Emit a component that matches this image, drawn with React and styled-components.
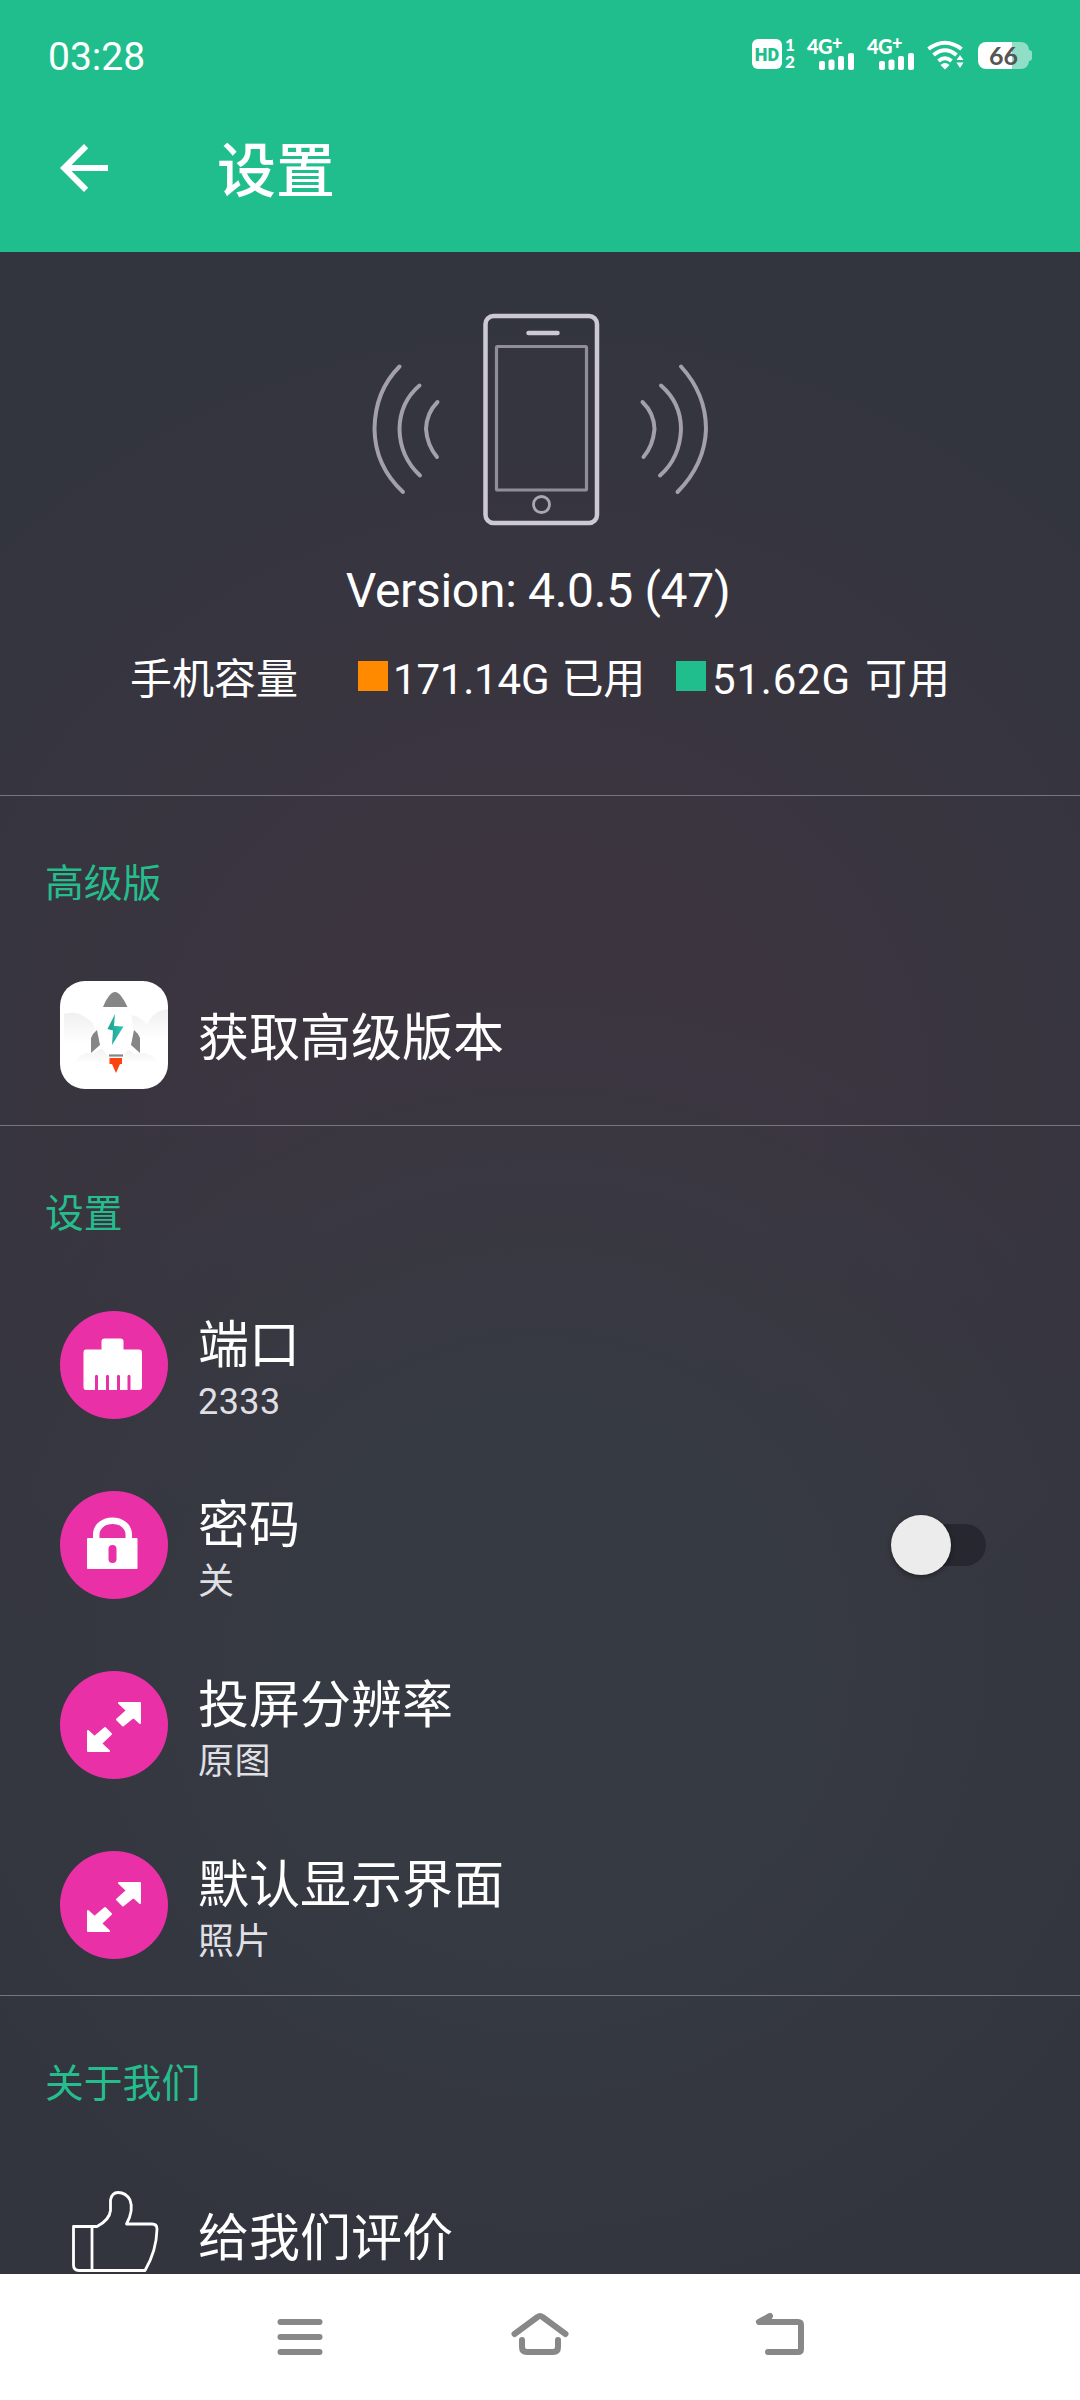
import styled, { createGlobalStyle } from 'styled-components';

const sections = [
  {
    title: '高级版',
    items: [{ id: 'premium', icon: 'rocket', name: '获取高级版本' }],
  },
  {
    title: '设置',
    items: [
      { id: 'port', icon: 'port', name: '端口', value: '2333' },
      { id: 'password', icon: 'lock', name: '密码', value: '关', toggle: true },
      { id: 'resolution', icon: 'expand', name: '投屏分辨率', value: '原图' },
      { id: 'screen', icon: 'expand', name: '默认显示界面', value: '照片' },
    ],
  },
  {
    title: '关于我们',
    items: [{ id: 'rate', icon: 'thumb', name: '给我们评价' }],
  },
];

const RocketIcon = () => (
  <svg width="108" height="108" viewBox="0 0 108 108">
    <defs>
      <linearGradient id="cloud" x1="0" y1="0" x2="0" y2="1">
        <stop offset="0" stopColor="#f0f0f0" />
        <stop offset="0.8" stopColor="#fff" />
      </linearGradient>
      <linearGradient id="bolt" x1="0" y1="0" x2="1" y2="0">
        <stop offset="0" stopColor="#1f9e8f" />
        <stop offset="1" stopColor="#2fc6b4" />
      </linearGradient>
    </defs>
    <rect width="108" height="108" rx="25" fill="#fff" />
    <path d="M4 33Q17 29 26 37Q35 41 37 54V70H4Z" fill="url(#cloud)" />
    <path d="M72 34Q82 36 87 44Q92 30 108 28V66H72Z" fill="url(#cloud)" />
    <path d="M15 80Q22 70 34 72Q45 63 55 70Q66 66 75 73Q88 69 98 80V86H15Z" fill="url(#cloud)" />
    <path d="M55 12C34 26 32 58 47 74H64C78 58 76 26 55 12Z" fill="#fff" />
    <path d="M55 11Q52 11 49 15Q45 20 43 26H67.500Q65 20 61 15Q58 11 55 11Z" fill="#868686" />
    <path d="M37 49L40 64L31 72V57Q33 52 37 49Z" fill="#868686" />
    <path d="M74 49L71 64L80 72V57Q78 52 74 49Z" fill="#868686" />
    <path d="M55 33L47.500 48L53 49.500L52 64L63.500 45.500L54 45Z" fill="url(#bolt)" />
    <path d="M49 74.500H63" stroke="#868686" strokeWidth="2.200" />
    <path d="M49.500 77H62V83H60L56 92L52 83H49.500Z" fill="#fb4310" />
  </svg>
);

const PortIcon = () => (
  <svg width="108" height="108" viewBox="0 0 108 108">
    <circle cx="54" cy="54" r="54" fill="#ea30a7" />
    <path
      d="M26 38.500H41.500V30.500Q41.500 27.500 44.500 27.500H60.500Q63.500 27.500 63.500 30.500V38.500H79Q82 38.500 82 41.500V76Q82 79 79 79H70.500V65Q69 62.500 67.500 65V79H60V65Q58.500 62.500 57 65V79H49V65Q47.500 62.500 46 65V79H38V65Q36.500 62.500 35 65V79H26Q23.500 79 23.500 76V41.500Q23.500 38.500 26 38.500Z"
      fill="#fff"
    />
  </svg>
);

const LockIcon = () => (
  <svg width="108" height="108" viewBox="0 0 108 108">
    <circle cx="54" cy="54" r="54" fill="#ea30a7" />
    <path d="M36.200 50V44C36.200 25 68.800 25 68.800 44V50" fill="none" stroke="#fff" strokeWidth="6.500" />
    <rect x="27" y="47" width="50.500" height="31" rx="1" fill="#fff" />
    <rect x="48.500" y="54" width="8" height="18" rx="4" fill="#ea30a7" />
  </svg>
);

const ExpandIcon = () => (
  <svg width="108" height="108" viewBox="0 0 108 108">
    <circle cx="54" cy="54" r="54" fill="#ea30a7" />
    <g fill="#fff" stroke="#fff" strokeWidth="2" strokeLinejoin="round">
      <path d="M59 32H80V52L73.500 46L63 54.500L57 48.500L67 39.500Z" />
      <path d="M49 80H28V60L34.500 66L45 57L51 63L41 72.500Z" />
    </g>
  </svg>
);

const ThumbIcon = () => (
  <svg width="108" height="108" viewBox="0 0 108 108" fill="none" stroke="#fff" strokeWidth="2.800" strokeLinejoin="round">
    <path d="M13.500 45.500H37Q49.500 39 50.500 29.500V19Q52 11.500 58 11.500Q66 11.500 70 19Q74 29 66.500 43H92Q97 43 97 48Q96.500 70 85 89.500H19Q13.500 89.500 13.500 84Z" />
    <path d="M32 45.500V89.500" />
  </svg>
);

const icons = {
  rocket: RocketIcon,
  port: PortIcon,
  lock: LockIcon,
  expand: ExpandIcon,
  thumb: ThumbIcon,
};

const Signal = () => (
  <SignalBox>
    <SignalLabel>4G<sup>+</sup></SignalLabel>
    <svg width="36" height="17" viewBox="0 0 36 17" fill="#fff">
      <rect x="0" y="8" width="6" height="9" rx="2" />
      <rect x="9.500" y="6.500" width="6" height="10.500" rx="2" />
      <rect x="19" y="3" width="6" height="14" rx="2" />
      <rect x="29" y="0" width="6" height="17" rx="2" />
    </svg>
  </SignalBox>
);

const StatusBar = () => (
  <Status>
    <Clock>03:28</Clock>
    <StatusIcons>
      <HdBadge>HD</HdBadge>
      <SimNumbers>
        <span>1</span>
        <span>2</span>
      </SimNumbers>
      <Signal />
      <Signal />
      <WifiIcon width="38" height="30" viewBox="0 0 38 30">
        <g fill="none" stroke="#fff" strokeWidth="4">
          <path d="M1.500 9Q18 -3.500 34.500 9" />
          <path d="M6.500 15Q18 5.500 29.500 15" />
          <path d="M11.500 21Q18 15.500 24.500 21" />
        </g>
        <path d="M13.500 25Q18 21 22.500 25L18 29.500Z" fill="#fff" />
        <path d="M29.500 20L33 15L36.500 20ZM29.500 22.500L33 28L36.500 22.500Z" fill="#fff" />
      </WifiIcon>
      <Battery>66</Battery>
    </StatusIcons>
  </Status>
);

const PhoneArt = () => (
  <svg width="400" height="220" viewBox="340 310 400 220" fill="none" strokeLinecap="round">
    <rect x="485.500" y="316" width="111.500" height="207" rx="8" stroke="#cdc9d4" strokeWidth="4.500" />
    <path d="M528.500 333H557.500" stroke="#cdc9d4" strokeWidth="4.500" />
    <rect x="496.500" y="346.500" width="90" height="143.500" rx="1" stroke="#918d99" strokeWidth="3.200" />
    <circle cx="541.500" cy="504.500" r="8" stroke="#aba7b2" strokeWidth="2.800" />
    <g stroke="#a4a0ab" strokeWidth="4">
      <path d="M399.500 366.500Q375 391 374.500 429Q375 466 403 492" />
      <path d="M419.500 385.500Q400 402 399.500 429Q400 457 420 475.500" />
      <path d="M437.500 402Q426.500 413 426 429Q427 445 437 457" />
      <path d="M681 366.500Q706 394 706 429Q705 464 677.500 492" />
      <path d="M661 385.500Q681 403 681 429Q680 458 660 475.500" />
      <path d="M642.500 402Q654 413 654.500 429Q653 446 643.500 457" />
    </g>
  </svg>
);

const App = () => {
  return (
    <Page>
      <GlobalStyle />
      <Header>
        <StatusBar />
        <TitleBar>
          <svg width="72" height="72" viewBox="0 0 24 24" fill="#fff">
            <path d="M20 11H7.830l5.590-5.590L12 4l-8 8 8 8 1.410-1.410L7.830 13H20v-2z" />
          </svg>
          <h1>设置</h1>
        </TitleBar>
      </Header>
      <Content>
        <Device>
          <PhoneArt />
          <Version>Version: 4.0.5 (47)</Version>
          <Storage>
            <StorageLabel>手机容量</StorageLabel>
            <Swatch $color="#ff8a00" />
            <Used>171.14G 已用</Used>
            <Swatch $color="#20be8c" />
            <Free>51.62G 可用</Free>
          </Storage>
        </Device>
        {
          sections.map((section) => (
            <Section key={section.title}>
              <SectionTitle>{section.title}</SectionTitle>
              {
                section.items.map((item) => {
                  const Icon = icons[item.icon];
                  return (
                    <Row key={item.id}>
                      <Icon />
                      <RowText>
                        <RowName>{item.name}</RowName>
                        {item.value && <RowValue>{item.value}</RowValue>}
                      </RowText>
                      {item.toggle && <Toggle><Knob /></Toggle>}
                    </Row>
                  );
                })
              }
            </Section>
          ))
        }
      </Content>
      <NavBar>
        <svg width="60" height="60" viewBox="0 0 60 60">
          <path d="M10.500 15H49.500M10.500 30H49.500M10.500 45H49.500" />
        </svg>
        <svg width="60" height="60" viewBox="0 0 60 60">
          <path d="M4.500 27L27.500 10Q30 8 32.500 10L55.500 27M12 33V40Q12 45 17 45H43Q48 45 48 40V33" />
        </svg>
        <svg width="60" height="60" viewBox="0 0 60 60">
          <path d="M20 9L9 15H48Q51 15 51 18V42Q51 45 48 45H18" />
          <path d="M20 9L9 15H20Z" fill="#888" strokeWidth="4" />
        </svg>
      </NavBar>
    </Page>
  );
}

const GlobalStyle = createGlobalStyle`
  * {
    box-sizing: border-box;
  }
  body {
    margin: 0;
  }
  svg {
    display: block;
    flex-shrink: 0;
  }
`

const Page = styled.div`
  display: flex;
  flex-direction: column;
  width: 1080px;
  height: 2400px;
  overflow: hidden;
  color: #fff;
  font-family: Roboto, 'Noto Sans CJK SC', sans-serif;
`

const Header = styled.header`
  height: 252px;
  flex-shrink: 0;
  background: #20be8c;
`

const Status = styled.div`
  display: flex;
  justify-content: space-between;
  height: 84px;
  padding: 0 48px;
`

const Clock = styled.span`
  margin-top: 29px;
  line-height: 56px;
  font-size: 39px;
`

const StatusIcons = styled.div`
  display: flex;
  align-items: flex-start;
  padding-top: 39px;
  font-family: Lato, sans-serif;
`

const HdBadge = styled.span`
  width: 30px;
  height: 30px;
  border-radius: 6px;
  background: #fff;
  color: #20be8c;
  font: 900 18px/31px Roboto, sans-serif;
  text-align: center;
`

const SimNumbers = styled.span`
  display: flex;
  flex-direction: column;
  align-items: center;
  gap: 1px;
  width: 12px;
  margin: -2px 11px 0 2px;
  font-size: 17px;
  font-weight: 900;
  line-height: 16px;
`

const SignalBox = styled.span`
  display: flex;
  flex-direction: column;
  align-items: flex-end;
  width: 48px;
  margin-right: 12px;
  height: 30px;
`

const SignalLabel = styled.span`
  align-self: flex-start;
  height: 14px;
  line-height: 15px;
  font-size: 20px;
  font-weight: 900;
  letter-spacing: -0.5px;
  white-space: nowrap;
  sup {
    font-size: 18px;
    line-height: 0;
    vertical-align: 4px;
  }
`

const WifiIcon = styled.svg`
  margin: 1px 13px 0 0;
`

const Battery = styled.span`
  position: relative;
  width: 51px;
  height: 27px;
  margin: 3px 3px 0 0;
  border-radius: 8px;
  background: linear-gradient(to right, #fff 34px, #90dec5 34px);
  color: #555;
  font-size: 25px;
  font-weight: 700;
  line-height: 27px;
  text-align: center;
  &::after {
    content: '';
    position: absolute;
    top: 8px;
    right: -3px;
    width: 3px;
    height: 11px;
    border-radius: 0 3px 3px 0;
    background: #90dec5;
  }
`

const TitleBar = styled.div`
  display: flex;
  align-items: center;
  height: 168px;
  padding: 0 48px;
  h1 {
    margin: 8px 0 0 97px;
    font-size: 59px;
    font-weight: 500;
    line-height: 80px;
  }
`

const Content = styled.main`
  flex: 1;
  min-height: 0;
  overflow: hidden;
  background:
    radial-gradient(circle at 540px 1400px, #363a42 240px, rgba(54, 58, 66, 0) 680px),
    radial-gradient(circle at 540px 860px, #3c3540 250px, rgba(60, 53, 64, 0) 860px),
    #32353e;
`

const Device = styled.section`
  display: flex;
  flex-direction: column;
  align-items: center;
  height: 543px;
  padding-top: 58px;
`

const Version = styled.p`
  margin: 33px 0 1px;
  padding-right: 4px;
  font-size: 48px;
  line-height: 56px;
  letter-spacing: -0.3px;
`

const Storage = styled.div`
  display: flex;
  width: 100%;
  margin-top: 30px;
  padding-left: 130px;
  font-size: 42px;
  line-height: 60px;
  white-space: nowrap;
`

const StorageLabel = styled.span`
  width: 228px;
`

const Swatch = styled.span`
  width: 30px;
  height: 30px;
  margin-top: 11px;
  background: ${(props) => props.$color};
`

const Used = styled.span`
  width: 288px;
  padding-left: 5px;
  letter-spacing: -0.2px;
  word-spacing: 2px;
`

const Free = styled.span`
  padding-left: 6px;
  letter-spacing: 0.8px;
  word-spacing: 3px;
`

const Section = styled.section`
  border-top: 1px solid #77757d;
  margin-bottom: -1px;
`

const SectionTitle = styled.h2`
  height: 149px;
  margin: 0;
  padding: 58px 0 0 45px;
  color: #25bd8d;
  font-size: 38.8px;
  font-weight: 400;
  line-height: 60px;
`

const Row = styled.div`
  display: flex;
  align-items: center;
  height: 180px;
  padding: 0 90px 0 60px;
  &:last-child {
    margin-bottom: 1px;
  }
`

const RowText = styled.div`
  flex: 1;
  margin-left: 30px;
  padding-top: 8px;
`

const RowName = styled.div`
  font-size: 51px;
  line-height: 62px;
`

const RowValue = styled.div`
  margin: 1px 0 -3px;
  color: #dfdfe4;
  font-size: 36px;
  line-height: 48px;
  letter-spacing: 0.4px;
`

const Toggle = styled.span`
  display: flex;
  align-items: center;
  width: 84px;
  height: 42px;
  margin-right: 4px;
  border-radius: 21px;
  background: #26272f;
`

const Knob = styled.span`
  width: 60px;
  height: 60px;
  flex-shrink: 0;
  margin-left: -11px;
  border-radius: 50%;
  background: #ececec;
  box-shadow: 0 2px 5px rgba(0, 0, 0, 0.4);
`

const NavBar = styled.nav`
  display: flex;
  justify-content: center;
  gap: 180px;
  height: 126px;
  flex-shrink: 0;
  padding-top: 33px;
  background: #fff;
  svg {
    fill: none;
    stroke: #888;
    stroke-width: 6;
    stroke-linecap: round;
    stroke-linejoin: round;
  }
`

export default App;
